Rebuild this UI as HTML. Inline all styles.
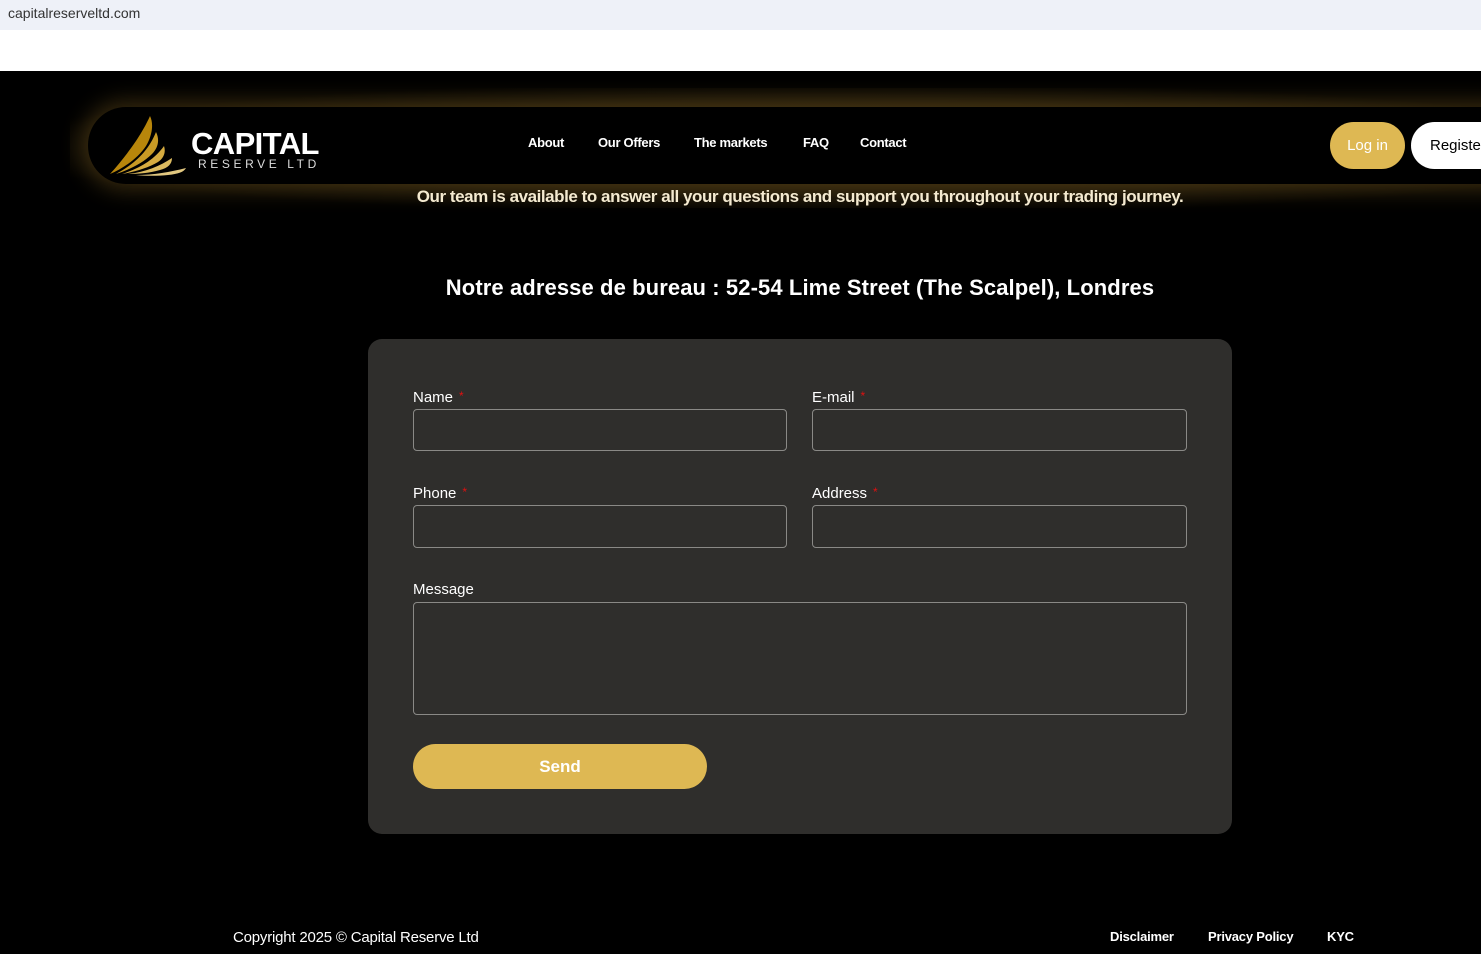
<!DOCTYPE html>
<html><head><meta charset="utf-8"><style>
*{box-sizing:border-box;margin:0;padding:0}
body{width:1481px;height:954px;background:#000;font-family:"Liberation Sans",sans-serif;position:relative;overflow:hidden;color:#fff}
.urlbar{position:absolute;left:0;top:0;width:1481px;height:30px;background:#eef1f8;color:#333;font-size:14px;padding:5px 8px}
.white{position:absolute;left:0;top:30px;width:1481px;height:41px;background:#fff}
.glow{position:absolute;left:70px;top:88px;width:1500px;height:120px;background:radial-gradient(ellipse at 50% 50%,#3a2c10 0%,#1a1408 55%,#000 80%)}
.hdr{position:absolute;left:88px;top:107px;width:1460px;height:77px;background:#000;border-radius:38px 0 0 38px;box-shadow:0 0 22px 6px rgba(120,90,30,.45)}
.nav{position:absolute;top:135px;font-size:13px;font-weight:bold;color:#fff;letter-spacing:-.3px}
.btn{position:absolute;top:122px;height:47px;border-radius:24px;font-size:15px;line-height:47px;text-align:center}
.tag{position:absolute;left:0;width:1600px;text-align:center;top:187px;font-size:17px;font-weight:bold;color:#f4ead0;letter-spacing:-.45px}
h2{position:absolute;left:0;width:1600px;text-align:center;top:275px;font-size:22px;font-weight:bold;color:#fff;letter-spacing:.1px}
.panel{position:absolute;left:368px;top:339px;width:864px;height:495px;background:#2f2e2c;border-radius:14px}
.lbl{position:absolute;font-size:15px;color:#fff}
.lbl b{color:#e01010;font-weight:normal;font-size:12px;vertical-align:top;margin-left:6px}
.inp{position:absolute;border:1px solid #8a8986;border-radius:4px;background:#2f2e2c}
.send{position:absolute;left:413px;top:744px;width:294px;height:45px;background:#deb853;border-radius:23px;text-align:center;line-height:45px;font-size:17px;font-weight:bold;color:#fff}
.foot{position:absolute;top:929px;font-size:15px;color:#fff;letter-spacing:-.2px}
.fl{position:absolute;top:929px;font-size:13px;font-weight:bold;color:#fff;letter-spacing:-.2px}
</style></head><body>
<div class="urlbar">capitalreserveltd.com</div>
<div class="white"></div>
<div class="glow"></div>
<div class="hdr"></div>
<svg style="position:absolute;left:108px;top:114px" width="86" height="64" viewBox="0 0 86 64">
<path d="M2 60 C20 40 34 20 42 2 C46 10 44 22 38 32 C30 44 16 54 2 60Z" fill="#b8860b"/>
<path d="M8 60 C26 50 40 38 48 18 C52 26 50 34 44 40 C34 50 20 56 8 60Z" fill="#c89a25"/>
<path d="M14 60 C32 54 46 46 56 32 C58 38 56 44 50 48 C40 54 26 58 14 60Z" fill="#d5ab40"/>
<path d="M20 60 C38 58 52 52 64 44 C64 50 60 54 52 56 C42 59 30 60 20 60Z" fill="#dcbb60"/>
<path d="M28 61 C46 61 62 58 78 54 C76 58 70 60 60 61 C50 62 38 62 28 61Z" fill="#e2c880"/>
</svg>
<div style="position:absolute;left:191px;top:126px;font-size:31px;font-weight:bold;color:#fff;letter-spacing:-.6px">CAPITAL</div>
<div style="position:absolute;left:198px;top:157px;font-size:12px;color:#ddd;letter-spacing:3.6px">RESERVE LTD</div>
<div class="nav" style="left:528px">About</div>
<div class="nav" style="left:598px">Our Offers</div>
<div class="nav" style="left:694px">The markets</div>
<div class="nav" style="left:803px">FAQ</div>
<div class="nav" style="left:860px">Contact</div>
<div class="btn" style="left:1330px;width:75px;background:#deb853;color:#fff">Log in</div>
<div class="btn" style="left:1411px;width:120px;background:#fff;color:#000;text-align:left;padding-left:19px">Register</div>
<div class="tag">Our team is available to answer all your questions and support you throughout your trading journey.</div>
<h2>Notre adresse de bureau : 52-54 Lime Street (The Scalpel), Londres</h2>
<div class="panel"></div>
<div class="lbl" style="left:413px;top:389px">Name<b>*</b></div>
<div class="inp" style="left:413px;top:409px;width:374px;height:42px"></div>
<div class="lbl" style="left:812px;top:389px">E-mail<b>*</b></div>
<div class="inp" style="left:812px;top:409px;width:375px;height:42px"></div>
<div class="lbl" style="left:413px;top:485px">Phone<b>*</b></div>
<div class="inp" style="left:413px;top:505px;width:374px;height:43px"></div>
<div class="lbl" style="left:812px;top:485px">Address<b>*</b></div>
<div class="inp" style="left:812px;top:505px;width:375px;height:43px"></div>
<div class="lbl" style="left:413px;top:581px">Message</div>
<div class="inp" style="left:413px;top:602px;width:774px;height:113px"></div>
<div class="send">Send</div>
<div class="foot" style="left:233px">Copyright 2025 © Capital Reserve Ltd</div>
<div class="fl" style="left:1110px">Disclaimer</div>
<div class="fl" style="left:1208px">Privacy Policy</div>
<div class="fl" style="left:1327px">KYC</div>
</body></html>
